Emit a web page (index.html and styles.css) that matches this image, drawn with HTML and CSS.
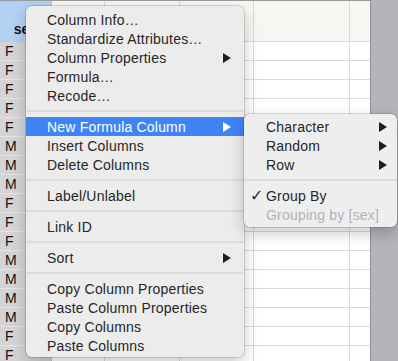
FILE: index.html
```html
<!DOCTYPE html>
<html lang="en">
<head>
    <meta charset="UTF-8">
    <meta name="viewport" content="width=device-width, initial-scale=1.0">
    <title>Column Menu</title>
    <link rel="stylesheet" href="styles.css">
</head>
<body>
    <div class="screen">
        <div class="sheet" id="sheet">
            <div class="cell head selected">sex</div>
            <div class="cell head"></div>
            <div class="cell head"></div>
            <div class="cell head"></div>
            <div class="cell head"></div>
            <div class="cell head last"></div>
        </div>
        <div class="gutter"></div>

        <div class="menu main-menu">
            <div class="item">Column Info…</div>
            <div class="item">Standardize Attributes…</div>
            <div class="item">Column Properties<span class="arrow"></span></div>
            <div class="item">Formula…</div>
            <div class="item">Recode…</div>
            <div class="sep"></div>
            <div class="item active">New Formula Column<span class="arrow"></span></div>
            <div class="item">Insert Columns</div>
            <div class="item">Delete Columns</div>
            <div class="sep"></div>
            <div class="item">Label/Unlabel</div>
            <div class="sep"></div>
            <div class="item">Link ID</div>
            <div class="sep"></div>
            <div class="item">Sort<span class="arrow"></span></div>
            <div class="sep"></div>
            <div class="item">Copy Column Properties</div>
            <div class="item">Paste Column Properties</div>
            <div class="item">Copy Columns</div>
            <div class="item">Paste Columns</div>
        </div>

        <div class="menu sub-menu">
            <div class="item"><span class="check"></span><span class="label">Character</span><span class="arrow"></span></div>
            <div class="item"><span class="check"></span><span class="label">Random</span><span class="arrow"></span></div>
            <div class="item"><span class="check"></span><span class="label">Row</span><span class="arrow"></span></div>
            <div class="sep"></div>
            <div class="item"><span class="check">✓</span><span class="label">Group By</span></div>
            <div class="item disabled"><span class="check"></span><span class="label">Grouping by [sex]</span></div>
        </div>
    </div>

    <script>
        const sexes = "FFFFFMMMFFFMMMMFF";

        const sheet = document.getElementById("sheet");
        for (let i = 0; i < sexes.length; i++) {
            const row = [
                { cls: "cell selected", text: sexes[i] },
                { cls: "cell", text: "" },
                { cls: "cell", text: "" },
                { cls: "cell", text: "" },
                { cls: "cell", text: "" },
                { cls: "cell last", text: "" }
            ];
            row.forEach(c => {
                const div = document.createElement("div");
                div.className = c.cls;
                div.textContent = c.text;
                sheet.appendChild(div);
            });
        }
    </script>
</body>
</html>
```

FILE: styles.css
```css
body {
    margin: 0;
    font-family: "Liberation Sans", Arial, sans-serif;
    font-size: 14px;
    color: #111;
}

.screen {
    position: relative;
    display: flex;
    height: 361px;
    overflow: hidden;
}

/* spreadsheet */

.sheet {
    width: 370px;
    display: grid;
    grid-template-columns: 52px 53px 75px 74px 96px 20px;
    grid-template-rows: 41px;
    grid-auto-rows: 19px;
    border-top: 1px solid #9a9a9a;
    background: #fff;
    flex-shrink: 0;
}

.cell {
    box-sizing: border-box;
    border-right: 1px solid #dadada;
    border-bottom: 1px solid #dadada;
    padding: 0 5px;
    line-height: 18px;
    white-space: nowrap;
    overflow: hidden;
}

.cell.last {
    border-right: none;
}

.cell.selected {
    background: #d4d4d4;
    border-bottom-color: #e6e6e6;
    border-right-color: #c4c4c4;
}

.head {
    background: #f6f6f2;
    display: flex;
    align-items: flex-end;
    justify-content: center;
    padding-bottom: 5px;
    font-weight: bold;
    line-height: 14px;
}

.head.selected {
    background: #b3d1f5;
    border-bottom-color: #c9c9c9;
}

.gutter {
    flex: 1;
    background: #b3b5bb;
    border-left: 1px solid #8e8f93;
}

/* menus */

.menu {
    position: absolute;
    background: #ececec;
    border-radius: 6px;
    box-shadow: 0 0 0 1px rgba(0, 0, 0, 0.13), 0 6px 16px rgba(0, 0, 0, 0.22);
    color: #262626;
    letter-spacing: 0.2px;
}

.main-menu {
    left: 26px;
    top: 6px;
    width: 218px;
    padding: 4px 0 2px;
}

.sub-menu {
    left: 244px;
    top: 114px;
    width: 153px;
    padding: 3px 0;
    background: #eeeeee;
}

.item {
    height: 19px;
    display: flex;
    align-items: center;
    justify-content: space-between;
    padding: 0 13px 0 21px;
    white-space: nowrap;
}

.item.active {
    background: #3f84f5;
    color: #fff;
}

.sub-menu .item {
    justify-content: flex-start;
    padding: 0 10px 0 6px;
}

.sub-menu .label {
    flex: 1;
}

.check {
    width: 16px;
    font-family: "DejaVu Sans", sans-serif;
    font-size: 16px;
    line-height: 19px;
}

.item.disabled {
    color: #b3b3b3;
}

.arrow {
    width: 0;
    height: 0;
    border-left: 8px solid #1e1e1e;
    border-top: 5px solid transparent;
    border-bottom: 5px solid transparent;
}

.item.active .arrow {
    border-left-color: #fff;
}

.sep {
    height: 12px;
    display: flex;
    align-items: center;
}

.sep::after {
    content: "";
    flex: 1;
    height: 2px;
    background: #dcdcdc;
}
```
